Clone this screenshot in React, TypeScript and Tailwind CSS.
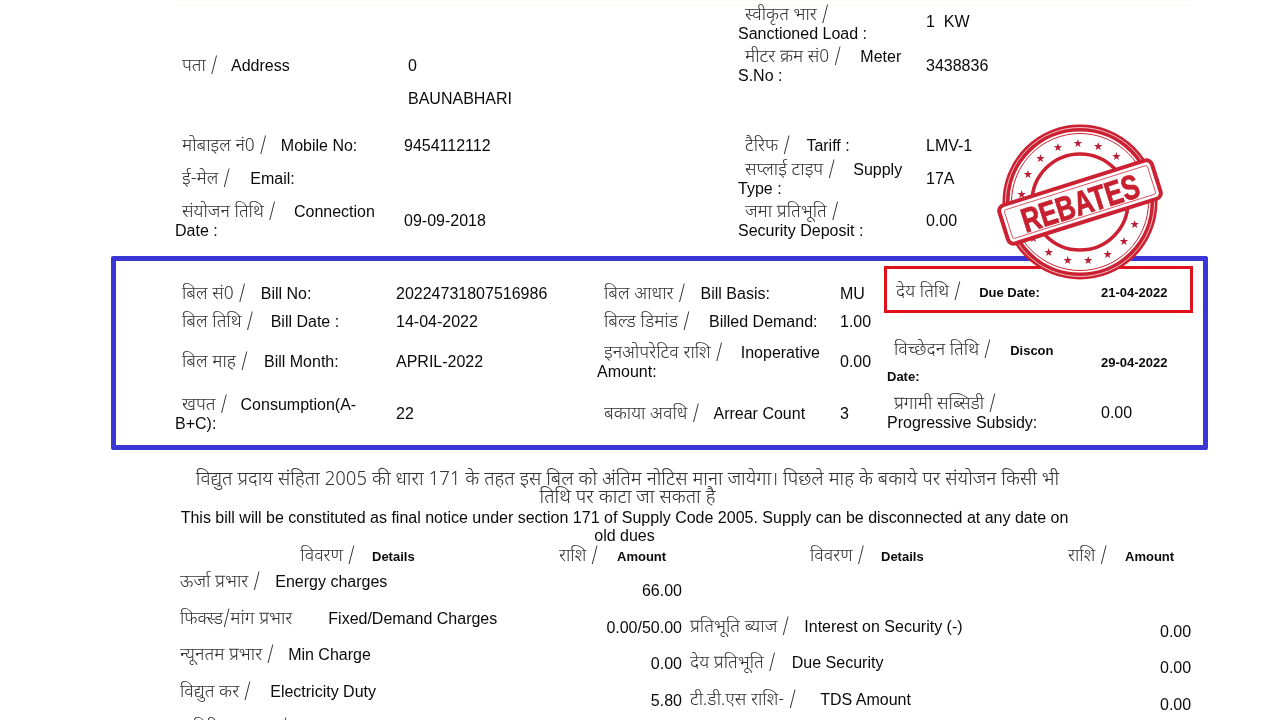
import type { ReactNode } from "react";

const hindi = "text-[18px] font-light text-[#333] font-['Noto_Sans_Devanagari','Lohit_Devanagari','Noto_Serif_Devanagari','Noto_Sans',serif]";

const Label = ({ hi, en, gap = "ml-4", small, noSlash }: { hi: string; en: string; gap?: string; small?: boolean; noSlash?: boolean }) => (
  <>
    <span className={hindi}>{noSlash ? hi : `${hi} /`}</span>
    {en && <span className={`${gap} ${small ? "text-[13px] font-bold" : ""}`}>{en}</span>}
  </>
);

const Row = ({ className, children }: { className: string; children: ReactNode }) => (
  <div className={`flex items-center ${className}`}>{children}</div>
);

const Stamp = () => {
  const stars = [-112, -92, -72, -52, -132, -152, -172, 22, 42, 62, 82, 102, 122, 142];
  return (
    <svg viewBox="0 0 170 170" className="absolute left-[995px] top-[117px] h-[170px] w-[170px]">
      <circle cx="85" cy="85" r="74" fill="#fff" stroke="#cc2132" strokeWidth="7" />
      <circle cx="85" cy="85" r="74.5" fill="none" stroke="#fff" strokeWidth="0.7" />
      <circle cx="85" cy="85" r="68.5" fill="none" stroke="#cc2132" strokeWidth="1" />
      <circle cx="85" cy="85" r="48" fill="none" stroke="#cc2132" strokeWidth="3.5" />
      {stars.map((a) => {
        const x = 85 + 59 * Math.cos((a * Math.PI) / 180);
        const y = 85 + 59 * Math.sin((a * Math.PI) / 180);
        return (
          <text key={a} x={x} y={y + 4} textAnchor="middle" fontSize="11" fill="#b81f36" fontFamily="DejaVu Sans">
            ★
          </text>
        );
      })}
      <g transform="rotate(-17.5 85 85)">
        <rect x="5" y="65" width="160" height="40" rx="6" fill="#fff" stroke="#cc2132" strokeWidth="4" />
        <rect x="10" y="70" width="150" height="30" rx="2" fill="none" stroke="#cc2132" strokeWidth="0.7" />
        <text x="85" y="98" textAnchor="middle" fontSize="34" fontWeight="700" fill="#c8202f" stroke="#c8202f" strokeWidth="0.8" fontFamily="Liberation Sans" textLength="122" lengthAdjust="spacingAndGlyphs">
          REBATES
        </text>
      </g>
    </svg>
  );
};

export default function App() {
  return (
    <div className="relative h-[720px] w-[1280px] overflow-hidden bg-white text-[16px] leading-[18px] text-[#0a0a0a] blur-[0.3px] font-['Liberation_Sans',Arial,sans-serif]">
      {/* top customer section */}
      <div className="pl-[175px] pr-[90px] pt-[5px]">
        <Row className="h-[37px] border-t border-[#f7f7f0]">
          <div className="ml-[563px] w-[188px]"><div className="pl-[7px]"><Label hi="स्वीकृत भार" en="" /></div><div>Sanctioned Load :</div></div>
          <div className="mb-[4px]">1&nbsp; KW</div>
        </Row>
        <Row className="mt-[6px] h-[36px]">
          <div className="w-[229px] pl-[7px]"><Label hi="पता" en="Address" gap="ml-[13px]" /></div>
          <div className="w-[334px] pl-1">0</div>
          <div className="w-[188px]"><div className="pl-[7px]"><Label hi="मीटर क्रम सं0" en="Meter" gap="ml-[19px]" /></div><div>S.No :</div></div>
          <div>3438836</div>
        </Row>
        <Row className="h-[30px]">
          <div className="ml-[233px]">BAUNABHARI</div>
        </Row>
        <Row className="mt-[17px] h-[30px]">
          <div className="w-[229px] pl-[7px]"><Label hi="मोबाइल नं0" en="Mobile No:" gap="ml-[14px]" /></div>
          <div className="w-[334px]">9454112112</div>
          <div className="w-[188px] pl-[7px]"><Label hi="टैरिफ" en="Tariff :" /></div>
          <div>LMV-1</div>
        </Row>
        <Row className="h-[36px]">
          <div className="w-[563px] pl-[7px]"><Label hi="ई-मेल" en="Email:" gap="ml-5" /></div>
          <div className="w-[188px]"><div className="pl-[7px]"><Label hi="सप्लाई टाइप" en="Supply" gap="ml-[18px]" /></div><div>Type :</div></div>
          <div>17A</div>
        </Row>
        <Row className="mt-[6px] h-[36px]">
          <div className="w-[229px]"><div className="pl-[7px]"><Label hi="संयोजन तिथि" en="Connection" gap="ml-[18px]" /></div><div>Date :</div></div>
          <div className="w-[334px]">09-09-2018</div>
          <div className="w-[188px]"><div className="pl-[7px]"><Label hi="जमा प्रतिभूति" en="" /></div><div>Security Deposit :</div></div>
          <div>0.00</div>
        </Row>
      </div>

      {/* bill box */}
      <div className="ml-[111px] mt-[17px] flex h-[194px] w-[1097px] rounded-[2px] border-[5px] border-[#3a36d6] pl-[59px]">
        <div className="w-[709px] pt-[19px]">
          <Row className="h-[28px]">
            <div className="w-[221px] pl-[7px]"><Label hi="बिल सं0" en="Bill No:" gap="ml-[15px]" /></div>
            <div className="w-[201px]">20224731807516986</div>
            <div className="w-[243px] pl-[7px]"><Label hi="बिल आधार" en="Bill Basis:" gap="ml-[15px]" /></div>
            <div>MU</div>
          </Row>
          <Row className="h-[28px]">
            <div className="w-[221px] pl-[7px]"><Label hi="बिल तिथि" en="Bill Date :" gap="ml-[17px]" /></div>
            <div className="w-[201px]">14-04-2022</div>
            <div className="w-[243px] pl-[7px]"><Label hi="बिल्ड डिमांड" en="Billed Demand:" gap="ml-[19px]" /></div>
            <div>1.00</div>
          </Row>
          <Row className="h-[52px]">
            <div className="w-[221px] pl-[7px]"><Label hi="बिल माह" en="Bill Month:" /></div>
            <div className="w-[201px]">APRIL-2022</div>
            <div className="w-[243px]"><div className="pl-[7px]"><Label hi="इनओपरेटिव राशि" en="Inoperative" gap="ml-[18px]" /></div><div>Amount:</div></div>
            <div>0.00</div>
          </Row>
          <Row className="h-[52px]">
            <div className="w-[221px]"><div className="pl-[7px]"><Label hi="खपत" en="Consumption(A-" gap="ml-[13px]" /></div><div>B+C):</div></div>
            <div className="w-[201px]">22</div>
            <div className="w-[243px] pl-[7px]"><Label hi="बकाया अवधि" en="Arrear Count" gap="ml-[14px]" /></div>
            <div>3</div>
          </Row>
        </div>
        <div className="w-[309px] pt-[5px]">
          <Row className="h-[47px] border-[3px] border-[#e0101c] pt-[6px]">
            <div className="w-[214px] pl-[9px]"><Label hi="देय तिथि" en="Due Date:" gap="ml-[18px]" small /></div>
            <div className="text-[13px] font-bold">21-04-2022</div>
          </Row>
          <Row className="mt-[23px] h-[54px]">
            <div className="w-[217px] pl-[3px]"><div className="pl-[7px]"><Label hi="विच्छेदन तिथि" en="Discon" gap="ml-[19px]" small /></div><div className="mt-[8px] text-[13px] font-bold">Date:</div></div>
            <div className="text-[13px] font-bold">29-04-2022</div>
          </Row>
          <Row className="h-[46px]">
            <div className="w-[217px] pl-[3px]"><div className="pl-[7px]"><Label hi="प्रगामी सब्सिडी" en="" /></div><div>Progressive Subsidy:</div></div>
            <div>0.00</div>
          </Row>
        </div>
      </div>

      {/* notice */}
      <div className="ml-[176px] mt-[22px] w-[897px] text-center">
        <p className={`${hindi} pl-[6px] text-[19.2px]`}>
          विद्युत प्रदाय संहिता 2005 की धारा 171 के तहत इस बिल को अंतिम नोटिस माना जायेगा। पिछले माह के बकाये पर संयोजन किसी भी
          <br />
          तिथि पर काटा जा सकता है
        </p>
        <p className="mt-[1px]">
          This bill will be constituted as final notice under section 171 of Supply Code 2005. Supply can be disconnected at any date on
          <br />
          old dues
        </p>
      </div>

      {/* charges */}
      <div className="pl-[180px]">
        <Row className="mb-[2px] h-[24px]">
          <div className={`w-[175px] text-right ${hindi}`}>विवरण /</div>
          <div className="ml-[17px] w-[187px] text-[13px] font-bold">Details</div>
          <div className={`w-[58px] ${hindi}`}>राशि /</div>
          <div className="w-[193px] text-[13px] font-bold">Amount</div>
          <div className={`w-[71px] ${hindi}`}>विवरण /</div>
          <div className="w-[187px] text-[13px] font-bold">Details</div>
          <div className={`w-[57px] ${hindi}`}>राशि /</div>
          <div className="text-[13px] font-bold">Amount</div>
        </Row>
        {[
          ["ऊर्जा प्रभार", "Energy charges", "66.00", "", "", "", "ml-[15px]", ""],
          ["फिक्स्ड/मांग प्रभार", "Fixed/Demand Charges", "0.00/50.00", "प्रतिभूति ब्याज", "Interest on Security (-)", "0.00", "ml-9", "ml-[15px]"],
          ["न्यूनतम प्रभार", "Min Charge", "0.00", "देय प्रतिभूति", "Due Security", "0.00", "ml-[14px]", "ml-4"],
          ["विद्युत कर", "Electricity Duty", "5.80", "टी.डी.एस राशि-", "TDS Amount", "0.00", "ml-[19px]", "ml-6"],
          ["अतिरिक्त प्रभार", "", "", "", "", "", "", ""],
        ].map(([hi, en, amt, hi2, en2, amt2, gap, gap2]) => (
          <div key={hi} className="flex h-[36.5px] pt-[2px]">
            <div className="w-[380px]">
              <Label hi={hi} en={en} gap={gap} noSlash={hi.includes("/")} />
            </div>
            <div className="mt-[9px] w-[122px] text-right">{amt}</div>
            <div className="ml-[8px] mt-[8px] w-[470px]">{hi2 && <Label hi={hi2} en={en2} gap={gap2} />}</div>
            <div className="mt-[13px] w-[29px] text-right">{amt2}</div>
          </div>
        ))}
      </div>

      <Stamp />
    </div>
  );
}
